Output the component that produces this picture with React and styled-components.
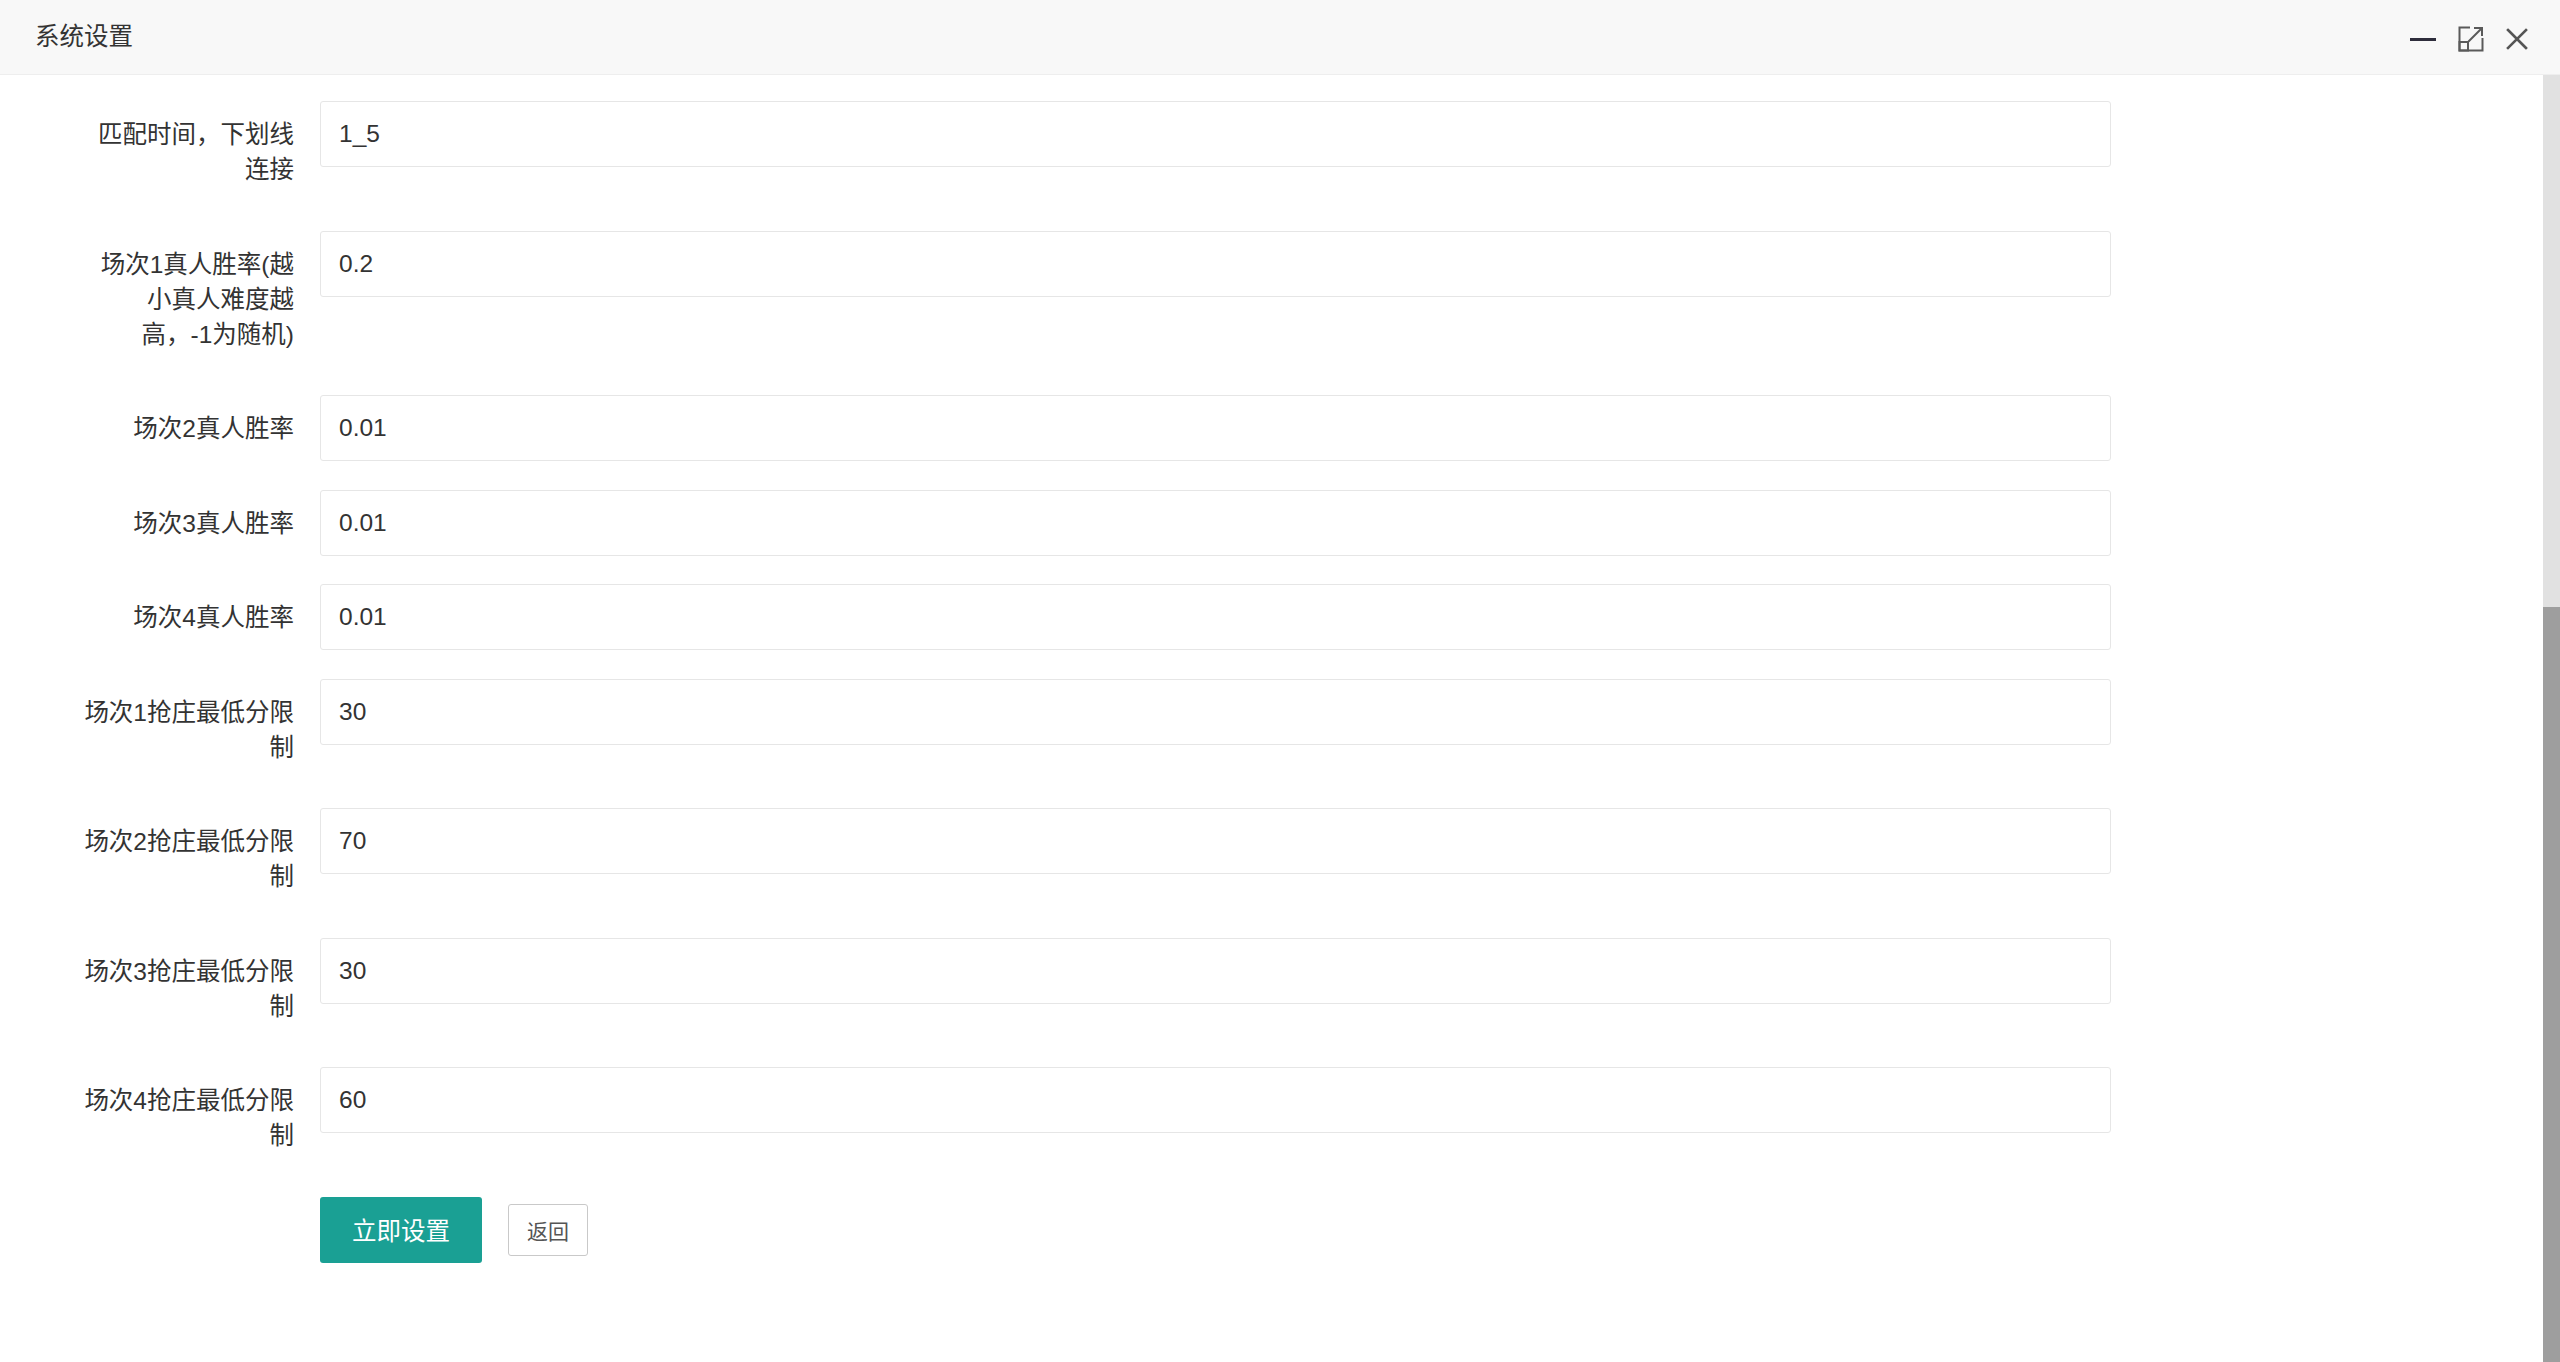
import React from "react";
import styled, { createGlobalStyle } from "styled-components";

const GlobalStyle = createGlobalStyle`
  html, body {
    margin: 0;
    padding: 0;
    background: #ffffff;
  }
  body {
    font-family: "Liberation Sans", "Noto Sans CJK SC", sans-serif;
    color: #333333;
  }
  * { box-sizing: border-box; }
`;

const Layer = styled.div`
  width: 2560px;
  height: 1362px;
  display: flex;
  flex-direction: column;
  overflow: hidden;
  background: #ffffff;
`;

const TitleBar = styled.div`
  height: 75px;
  flex: none;
  display: flex;
  align-items: center;
  background: #f8f8f8;
  border-bottom: 1px solid #eeeeee;
  padding: 0 32px 0 35px;
`;

const Title = styled.div`
  font-size: 24.5px;
  line-height: 74px;
  color: #333333;
  flex: 1;
`;

const SetWin = styled.div`
  display: flex;
  align-items: center;
  gap: 22px;
  padding-top: 4px;
`;

const IconButton = styled.span`
  display: inline-flex;
  align-items: center;
  justify-content: center;
  width: ${(p) => p.$w}px;
  height: 26px;
  cursor: pointer;
`;

const Body = styled.div`
  flex: 1;
  min-height: 0;
  display: flex;
`;

const Content = styled.div`
  flex: 1;
  padding: 26px 0 0 80px;
  background: #ffffff;
`;

const FormItem = styled.div`
  display: flex;
  align-items: flex-start;
  margin-bottom: 27.5px;
`;

const Label = styled.label`
  width: 240px;
  flex: none;
  padding: 16px 26px 16px 0;
  font-size: 24.5px;
  line-height: 35px;
  text-align: right;
  color: #333333;
`;

const InputBlock = styled.div`
  width: 1791px;
`;

const Input = styled.input`
  display: block;
  width: 100%;
  height: 66px;
  padding: 0 18px;
  border: 1px solid #e6e6e6;
  border-radius: 3px;
  background: #ffffff;
  font-family: "Liberation Sans", "Noto Sans CJK SC", sans-serif;
  font-size: 24.5px;
  color: #333333;
  outline: none;
`;

const ButtonRow = styled.div`
  display: flex;
  align-items: center;
  gap: 26px;
  margin-left: 240px;
`;

const PrimaryButton = styled.button`
  height: 66px;
  padding: 0 32px;
  border: none;
  border-radius: 3px;
  background: #1aa094;
  color: #ffffff;
  font-family: "Liberation Sans", "Noto Sans CJK SC", sans-serif;
  font-size: 24.5px;
  cursor: pointer;
`;

const SmallButton = styled.button`
  height: 52px;
  padding: 0 18px;
  border: 1px solid #c9c9c9;
  border-radius: 3px;
  background: #ffffff;
  color: #555555;
  font-family: "Liberation Sans", "Noto Sans CJK SC", sans-serif;
  font-size: 21px;
  cursor: pointer;
`;

const ScrollTrack = styled.div`
  width: 17px;
  flex: none;
  background: #e1e1e1;
  display: flex;
  flex-direction: column;
  padding-top: ${(p) => p.$offset}px;
`;

const ScrollThumb = styled.div`
  flex: 1;
  background: #9e9e9e;
`;

const fields = [
  { label: "匹配时间，下划线连接", value: "1_5" },
  { label: "场次1真人胜率(越小真人难度越高，-1为随机)", value: "0.2" },
  { label: "场次2真人胜率", value: "0.01" },
  { label: "场次3真人胜率", value: "0.01" },
  { label: "场次4真人胜率", value: "0.01" },
  { label: "场次1抢庄最低分限制", value: "30" },
  { label: "场次2抢庄最低分限制", value: "70" },
  { label: "场次3抢庄最低分限制", value: "30" },
  { label: "场次4抢庄最低分限制", value: "60" },
];

const MinIcon = () => (
  <svg width="26" height="26" viewBox="0 0 26 26">
    <rect x="0" y="12" width="26" height="3" fill="#2e2d3c" />
  </svg>
);

const MaxIcon = () => (
  <svg width="26" height="26" viewBox="0 0 26 26" fill="none" stroke="#5a5a5a" strokeWidth="2">
    <path d="M12 1.5 H1.5 V24.5 H24.5 V12" />
    <rect x="1.5" y="16" width="8.5" height="8.5" />
    <path d="M10.5 15.5 L23.5 2.5" />
    <path d="M16 2 H24 V10" />
  </svg>
);

const CloseIcon = () => (
  <svg width="22" height="22" viewBox="0 0 22 22" fill="none" stroke="#555555" strokeWidth="2.6" strokeLinecap="square">
    <path d="M2 2 L20 20 M20 2 L2 20" />
  </svg>
);

export default function App() {
  return (
    <>
      <GlobalStyle />
      <Layer>
        <TitleBar>
          <Title>系统设置</Title>
          <SetWin>
            <IconButton $w={26}><MinIcon /></IconButton>
            <IconButton $w={26}><MaxIcon /></IconButton>
            <IconButton $w={22}><CloseIcon /></IconButton>
          </SetWin>
        </TitleBar>
        <Body>
          <Content>
            {fields.map((f, i) => (
              <FormItem key={i}>
                <Label>{f.label}</Label>
                <InputBlock>
                  <Input defaultValue={f.value} />
                </InputBlock>
              </FormItem>
            ))}
            <ButtonRow>
              <PrimaryButton>立即设置</PrimaryButton>
              <SmallButton>返回</SmallButton>
            </ButtonRow>
          </Content>
          <ScrollTrack $offset={532}>
            <ScrollThumb />
          </ScrollTrack>
        </Body>
      </Layer>
    </>
  );
}
